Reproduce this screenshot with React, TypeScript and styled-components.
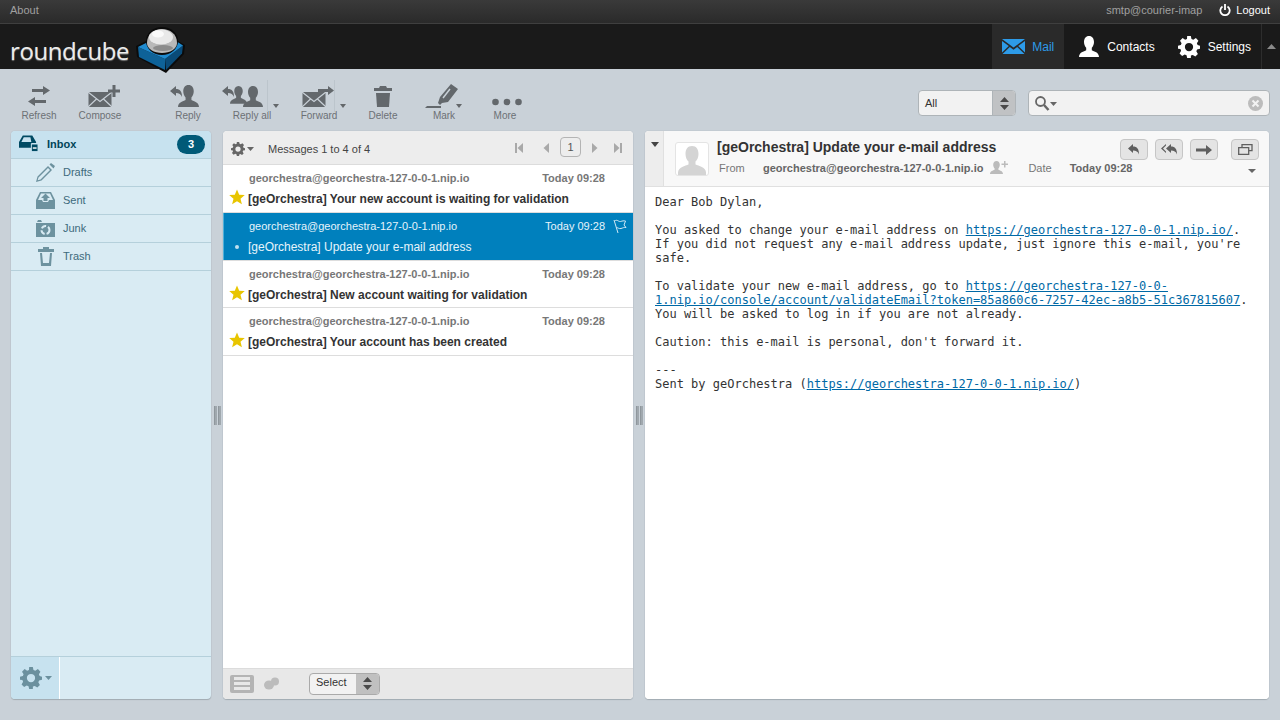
import { ReactNode } from 'react';
import styled, { createGlobalStyle } from 'styled-components';

const GlobalStyle = createGlobalStyle`
  html, body {
    margin: 0;
    padding: 0;
    height: 100%;
    overflow: hidden;
    background: #c9d1d8;
    font-family: "Liberation Sans", Arial, sans-serif;
    font-size: 12px;
  }
  #root { height: 100%; }
  * { box-sizing: border-box; }
`;

const Page = styled.div`
  width: 1280px;
  height: 720px;
  display: flex;
  flex-direction: column;
`;

const TopLine = styled.div`
  height: 24px;
  flex: none;
  display: flex;
  align-items: center;
  justify-content: space-between;
  padding: 0 10px 3px;
  background: linear-gradient(#3a3a3a, #2a2a2a);
  border-bottom: 1px solid #3f3f3f;
  font-size: 11px;
  color: #a0a0a0;
`;

const TopRight = styled.div`
  display: flex;
  align-items: center;
  gap: 17px;
`;

const Logout = styled.span`
  display: flex;
  align-items: center;
  gap: 5px;
  color: #fff;
`;

const Header = styled.div`
  height: 45px;
  flex: none;
  display: flex;
  justify-content: space-between;
  background: #1a1a1a;
  position: relative;
  z-index: 2;
`;

const Logo = styled.div`
  display: flex;
  align-items: flex-start;
  padding: 10px 0 0 10px;
`;

const LogoText = styled.span`
  width: 126px;
  font-family: "Open Sans", "Liberation Sans", sans-serif;
  font-weight: 400;
  font-size: 24px;
  line-height: 34px;
  letter-spacing: -0.4px;
  color: #ececec;
  text-shadow: 0 1px 1px #777;
`;

const LogoCube = styled.svg`
  margin-top: -7px;
  flex: none;
`;

const Nav = styled.div`
  display: flex;
  align-items: stretch;
`;

const NavTab = styled.div<{ $active?: boolean; $pl: number; $pr: number }>`
  display: flex;
  align-items: center;
  gap: ${(p) => (p.$active ? 7 : 8)}px;
  padding: 0 ${(p) => p.$pr}px 0 ${(p) => p.$pl}px;
  background: ${(p) => (p.$active ? '#2a2a2a' : 'transparent')};
  color: ${(p) => (p.$active ? '#2d9be8' : '#fff')};
`;

const NavMin = styled.div`
  width: 19px;
  display: flex;
  align-items: center;
  justify-content: center;
  border-left: 1px solid #2d2d2d;
`;

const Toolbar = styled.div`
  height: 62px;
  flex: none;
  display: flex;
  align-items: flex-start;
  padding: 10px 10px 0 11px;
`;

const ToolButton = styled.div<{ $w: number; $gap?: number }>`
  width: ${(p) => p.$w}px;
  margin-right: ${(p) => p.$gap ?? 0}px;
  display: flex;
  flex-direction: column;
  align-items: center;
  font-size: 10px;
  line-height: 12px;
  color: #6c7075;
  position: relative;
`;

// $ml / $mr push the drawing off the label's centre, the way the real toolbar sprites sit
const ToolIcon = styled.div<{ $ml?: number; $mr?: number }>`
  height: 34px;
  margin: 0 ${(p) => p.$mr ?? 0}px -3px ${(p) => p.$ml ?? 0}px;
  display: flex;
  align-items: center;
  justify-content: center;
`;

const ToolCaret = styled.span<{ $r: number }>`
  position: absolute;
  right: ${(p) => p.$r}px;
  top: 25px;
  border: 3.5px solid transparent;
  border-top: 4px solid #63676a;
  border-bottom: 0;
`;

const ToolDivider = styled.span<{ $r: number }>`
  position: absolute;
  right: ${(p) => p.$r}px;
  top: 1px;
  width: 1px;
  height: 32px;
  background: #bcc5cc;
`;

const Spring = styled.div`
  flex: 1;
`;

const FilterSelect = styled.div`
  width: 98px;
  height: 26px;
  margin: 11px 12px 0 0;
  display: flex;
  border: 1px solid #aeb4b8;
  border-radius: 4px;
  background: #f2f2f2;
  overflow: hidden;
  font-size: 11px;
  color: #333;
`;

const SelectValue = styled.div`
  flex: 1;
  padding-left: 6px;
  line-height: 24px;
`;

const SelectArrow = styled.div`
  width: 23px;
  background: #c0c2c4;
  border-left: 1px solid #aeb4b8;
  display: flex;
  align-items: center;
  justify-content: center;
`;

const SearchBox = styled.div`
  width: 242px;
  height: 26px;
  margin-top: 11px;
  display: flex;
  align-items: center;
  justify-content: space-between;
  padding: 0 6px;
  border: 1px solid #aeb4b8;
  border-radius: 4px;
  background: #f2f2f2;
`;

const Main = styled.div`
  flex: 1;
  min-height: 0;
  display: flex;
  padding: 0 11px 21px 11px;
`;

const Panel = styled.div<{ $w: number }>`
  width: ${(p) => p.$w}px;
  flex: none;
  display: flex;
  flex-direction: column;
  border-radius: 4px;
  overflow: hidden;
  background: #fff;
  box-shadow: 0 0 1px 0 #8f9aa3, 0 1px 1px 0 #a4adb4;
`;

const Splitter = styled.div`
  width: 12px;
  flex: none;
  display: flex;
  align-items: center;
  justify-content: center;
  gap: 1px;
`;

const Grip = styled.span`
  width: 3px;
  height: 19px;
  background: #a0a8ae;
  border-left: 1px solid #8f979d;
`;

const FolderPanel = styled(Panel)`
  background: #d9ebf3;
`;

const FolderList = styled.div`
  flex: 1;
`;

const FolderRow = styled.div<{ $active?: boolean }>`
  height: 28px;
  display: flex;
  align-items: center;
  padding: 0 0 1px ${(p) => (p.$active ? 8 : 25)}px;
  gap: ${(p) => (p.$active ? 9 : 8)}px;
  border-bottom: 1px solid #b5d0db;
  background: ${(p) => (p.$active ? '#c7e2ef' : 'transparent')};
  font-size: 11px;
  font-weight: ${(p) => (p.$active ? 700 : 400)};
  color: ${(p) => (p.$active ? '#004458' : '#3d6a7c')};
`;

const FolderIconBox = styled.span`
  width: 19px;
  height: 20px;
  display: flex;
  align-items: center;
  justify-content: center;
  flex: none;
`;

const Badge = styled.span`
  margin-left: auto;
  margin-right: 6px;
  width: 28px;
  height: 19px;
  border-radius: 10px;
  background: #005a78;
  color: #fff;
  font-size: 11px;
  font-weight: 700;
  text-align: center;
  line-height: 18px;
`;

const FolderFooter = styled.div`
  height: 43px;
  flex: none;
  display: flex;
  border-top: 1px solid #b5d0db;
`;

const FolderGear = styled.div`
  width: 49px;
  display: flex;
  align-items: center;
  padding-left: 9px;
  gap: 3px;
  background: #c7e2ef;
  border-right: 1px solid #fff;
`;

const ListHeader = styled.div`
  height: 34px;
  flex: none;
  display: flex;
  align-items: center;
  padding: 2px 11px 0 8px;
  background: #ededed;
  border-bottom: 1px solid #dcdcdc;
  font-size: 11px;
  color: #444;
`;

const Count = styled.span`
  margin-left: 13px;
  flex: 1;
`;

const Pager = styled.div`
  display: flex;
  align-items: center;
`;

const PagerStep = styled.span<{ $mr: number }>`
  display: flex;
  margin: -2px ${(p) => p.$mr}px 0 0;
`;

const PageBox = styled.span`
  width: 21px;
  height: 20px;
  margin-right: 10px;
  margin-top: -3px;
  border: 1px solid #b4b4b4;
  border-radius: 4px;
  text-align: center;
  line-height: 18px;
  color: #555;
`;

const Messages = styled.div`
  flex: 1;
  background: #fff;
`;

const MessageRow = styled.div<{ $selected?: boolean; $h: number }>`
  height: ${(p) => p.$h}px;
  display: grid;
  grid-template-columns: 25px 1fr 70px 28px;
  grid-template-rows: 23px 1fr;
  border-bottom: 1px solid #ddd;
  background: ${(p) => (p.$selected ? '#0080bd' : '#fff')};
  box-shadow: ${(p) => (p.$selected ? 'inset 1px 0 0 #4eb0d8' : 'none')};
  color: ${(p) => (p.$selected ? '#fff' : '#333')};
`;

const Sender = styled.span<{ $selected?: boolean }>`
  grid-column: 2;
  padding: 7px 0 0 1px;
  font-size: 11px;
  line-height: 13px;
  font-weight: ${(p) => (p.$selected ? 400 : 700)};
  color: ${(p) => (p.$selected ? '#e6f4fb' : '#777')};
`;

const DateCell = styled(Sender)`
  grid-column: 3;
  text-align: right;
  white-space: nowrap;
  padding-left: 0;
`;

const FlagCell = styled.span`
  grid-column: 4;
  padding: 6px 0 0 8px;
`;

const StarCell = styled.span`
  grid-column: 1;
  grid-row: 2;
  padding: 1px 0 0 6px;
`;

const Dot = styled.span`
  display: block;
  width: 4px;
  height: 4px;
  margin: 8px 0 0 6px;
  border-radius: 50%;
  background: #bfe0f0;
`;

const Subject = styled.span<{ $selected?: boolean }>`
  grid-column: 2 / 5;
  grid-row: 2;
  font-size: 12px;
  line-height: 20px;
  padding-top: 1px;
  font-weight: ${(p) => (p.$selected ? 400 : 700)};
  color: ${(p) => (p.$selected ? '#e6f4fb' : '#333')};
`;

const ListFooter = styled.div`
  height: 31px;
  flex: none;
  display: flex;
  align-items: center;
  padding: 0 0 1px 7px;
  background: #e8e8e8;
  border-top: 1px solid #dcdcdc;
`;

const ThreadIcons = styled.div`
  display: flex;
  align-items: center;
  gap: 10px;
  width: 79px;
`;

const ListIcon = styled.span`
  width: 24px;
  height: 18px;
  border-radius: 2px;
  background: #b4b4b4;
  display: flex;
  flex-direction: column;
  justify-content: center;
  gap: 2px;
  padding: 0 4px;

  i {
    display: block;
    height: 3px;
    background: #e8e8e8;
  }
`;

const SmallSelect = styled.div`
  width: 71px;
  height: 22px;
  display: flex;
  border: 1px solid #aaa;
  border-radius: 4px;
  background: #f2f2f2;
  overflow: hidden;
  font-size: 11px;
  color: #333;
`;

const SmallValue = styled.div`
  flex: 1;
  padding-left: 6px;
  line-height: 17px;
`;

const SmallArrow = styled.div`
  width: 23px;
  background: #c0c0c0;
  display: flex;
  align-items: center;
  justify-content: center;
`;

const MailHeader = styled.div`
  height: 56px;
  flex: none;
  display: flex;
  background: #f8f8f8;
  border-bottom: 1px solid #e0e0e0;
  position: relative;
`;

const Collapse = styled.div`
  width: 19px;
  flex: none;
  background: #ededed;
  border-right: 1px solid #e0e0e0;
  padding: 11px 0 0 6px;
`;

const CollapseArrow = styled.span`
  display: block;
  width: 0;
  border: 4px solid transparent;
  border-top: 5px solid #444;
  border-bottom: 0;
`;

const Avatar = styled.div`
  width: 34px;
  height: 34px;
  margin: 11px 8px 0 11px;
  flex: none;
  background: #fff;
  border: 1px solid #e4e4e4;
  border-radius: 3px;
  overflow: hidden;
`;

const MailSummary = styled.div`
  flex: 1;
  padding-top: 7px;
`;

const MailTitle = styled.h2`
  margin: 0;
  font-size: 14px;
  line-height: 18px;
  font-weight: 700;
  color: #333;
`;

const MailMeta = styled.div`
  display: flex;
  align-items: center;
  height: 20px;
  margin-top: 2px;
  padding-left: 2px;
  font-size: 11px;
  color: #777;
`;

const MetaFrom = styled.span`
  width: 44px;
`;

const MetaValue = styled.strong`
  color: #666;
`;

const MetaIcon = styled.svg`
  margin-left: 7px;
`;

const MetaDate = styled.span`
  margin-left: 20px;
  margin-right: 18px;
`;

const MailActions = styled.div`
  position: absolute;
  right: 10px;
  top: 8px;
  display: flex;
  gap: 7px;
`;

const ActionButton = styled.span<{ $gap?: number }>`
  width: 28px;
  height: 21px;
  margin-left: ${(p) => p.$gap ?? 0}px;
  display: flex;
  align-items: center;
  justify-content: center;
  background: #e4e4e4;
  border: 1px solid #c6c6c6;
  border-radius: 4px;
`;

const MoreHeaders = styled.span`
  position: absolute;
  right: 13px;
  top: 38px;
  border: 4px solid transparent;
  border-top: 4px solid #666;
  border-bottom: 0;
`;

const MailBody = styled.div`
  flex: 1;
  padding: 8px 10px;
  background: #fff;
  font-family: "DejaVu Sans Mono", monospace;
  font-size: 12px;
  line-height: 14px;
  color: #333;

  a {
    color: #0069a6;
    text-decoration: underline;
  }
`;

const BodyLine = styled.div`
  min-height: 14px;
  white-space: pre;
`;

const Icon = ({ w, h, children, fill = '#63686c' }: { w: number; h: number; children: ReactNode; fill?: string }) => (
  <svg width={w} height={h} viewBox={`0 0 ${w} ${h}`} fill={fill}>
    {children}
  </svg>
);

const Person = ({ x = 0, y = 0, s = 1 }: { x?: number; y?: number; s?: number }) => (
  <path
    transform={`translate(${x} ${y}) scale(${s})`}
    d="M10 0c3.200 0 5 2.600 5 6 0 2.400-1 4.600-2.200 5.800v2.400c2.200 1.200 7.200 2 7.200 6.800H0c0-4.800 5-5.600 7.200-6.800v-2.400C6 10.600 5 8.400 5 6c0-3.400 1.800-6 5-6z"
  />
);

const ReplyArrow = ({ x = 0, y = 0 }: { x?: number; y?: number }) => (
  <path transform={`translate(${x} ${y})`} d="M0 5 6 0v3c4 0 6 2.500 6 8-1-2.600-3-4-6-4v3z" />
);

const Envelope = ({ y }: { y: number }) => (
  <g transform={`translate(0 ${y})`}>
    <rect x="0.500" y="0" width="23" height="15" />
    <path d="M0 0 12 9.500 24 0M0 15l8.500-8M24 15l-8.500-8" fill="none" stroke="#c9d1d8" strokeWidth="1.200" />
  </g>
);

const Gear = ({ size, fill }: { size: number; fill: string }) => (
  <svg width={size} height={size} viewBox="0 0 24 24" fill={fill}>
    <path
      fillRule="evenodd"
      d="M10 0h4l.7 3.200 2 .8L19.500 2.300l2.800 2.800-1.700 2.800.8 2L24 10.500v3.500l-3.200.7-.8 2 1.700 2.800-2.800 2.800-2.800-1.700-2 .8L14 24h-4l-.7-3.100-2-.8-2.800 1.700-2.800-2.800 1.700-2.800-.8-2L0 14v-3.500l3.100-.6.800-2-1.700-2.800L5 2.300l2.800 1.700 2-.8zM12 7.500a4.500 4.500 0 1 0 0 9 4.500 4.500 0 0 0 0-9z"
    />
  </svg>
);

const Updown = ({ fill = '#4a4a4a' }: { fill?: string }) => (
  <svg width="9" height="13" viewBox="0 0 9 13" fill={fill}>
    <path d="M4.500 0 9 5H0zM0 8h9l-4.500 5z" />
  </svg>
);

const PagerArrow = ({ dir, bar }: { dir: 'l' | 'r'; bar?: boolean }) => (
  <svg width="9" height="10" viewBox="0 0 9 10" fill="#a9a9a9">
    {dir === 'l' ? (
      <>
        <path d="M8 0v10L2.500 5z" />
        {bar && <rect x="0" y="0" width="2" height="10" />}
      </>
    ) : (
      <>
        <path d="M1 0v10l5.500-5z" />
        {bar && <rect x="7" y="0" width="2" height="10" />}
      </>
    )}
  </svg>
);

const Star = () => (
  <svg width="16" height="16" viewBox="0 0 16 16" fill="#e8c500">
    <path d="M8 .5l2.200 5.200 5.600.4-4.300 3.600 1.400 5.500L8 12.200l-4.900 3 1.400-5.500L.2 6.100l5.600-.4z" />
  </svg>
);

const messages = [
  { subject: '[geOrchestra] Your new account is waiting for validation', h: 48 },
  { subject: '[geOrchestra] Update your e-mail address', selected: true, h: 48 },
  { subject: '[geOrchestra] New account waiting for validation', h: 47 },
  { subject: '[geOrchestra] Your account has been created', h: 48 },
];

const folders: { name: string; icon: ReactNode }[] = [
  {
    name: 'Drafts',
    icon: (
      <Icon w={19} h={19} fill="#6d929f">
        <path
          fillRule="evenodd"
          d="M0 19l1.500-5.500L12 3l4 4L5.500 17.500zM2.500 14.500l-.8 2.800 2.800-.8 9.500-9.500-2-2zM13.500 1.500 15 0l4 3-1.500 2.500z"
        />
      </Icon>
    ),
  },
  {
    name: 'Sent',
    icon: (
      <Icon w={19} h={17} fill="#6d929f">
        <path d="M4 0h11l4 8v9H0V8z" />
        <path d="M5 1.500h9L17 8h-4l-1 2H7L6 8H2z" fill="#d9ebf3" />
        <path d="M9.500 1.500 14 6h-2.500v3h-4V6H5z" />
      </Icon>
    ),
  },
  {
    name: 'Junk',
    icon: (
      <Icon w={19} h={17} fill="#6d929f">
        <path d="M1 2h5l-1-2H2zM0 3h19v14H0z" />
        <circle cx="9.500" cy="10" r="4" fill="none" stroke="#d9ebf3" strokeWidth="2" strokeDasharray="5 2" />
      </Icon>
    ),
  },
  {
    name: 'Trash',
    icon: (
      <Icon w={16} h={20} fill="#6d929f">
        <path d="M0 3h16v3H0zM5 1h6v2H5z" />
        <path d="M2 7h2l1 10h6l1-10h2l-1 13H3z" />
      </Icon>
    ),
  },
];

export default function App() {
  return (
    <Page>
      <GlobalStyle />
      <TopLine>
        <span>About</span>
        <TopRight>
          <span>smtp@courier-imap</span>
          <Logout>
            <svg width="12" height="12" viewBox="0 0 12 12" fill="none" stroke="#fff" strokeWidth="1.800">
              <path d="M3.500 2.500a4.700 4.700 0 1 0 5 0M6 0v6" />
            </svg>
            Logout
          </Logout>
        </TopRight>
      </TopLine>
      <Header>
        <Logo>
          <LogoText>roundcube</LogoText>
          <LogoCube width="50" height="46" viewBox="0 0 50 46">
            <path d="M0 19 12 13h28l9 5-1 9-18 19L1 30z" fill="#0b0b0b" />
            <path d="M2 20 29 32v11L3 30z" fill="#0e6298" />
            <path d="M29 32 47 18.500l-1 8L30 43z" fill="#0a4b78" />
            <path d="M2 20 14 14h26l7 4.500L29 32z" fill="#1f8bd0" />
            <ellipse cx="26" cy="14" rx="16" ry="14" fill="#0b0b0b" />
            <path d="M11 16C11 7 18 2 26 2s15 5 15 14c0 6-7 10-15 10S11 22 11 16z" fill="#b9b9b9" />
            <ellipse cx="25" cy="10" rx="12" ry="7.500" fill="#e9e9e9" />
            <ellipse cx="22" cy="7" rx="6" ry="3.500" fill="#fafafa" />
            <ellipse cx="27" cy="21" rx="10" ry="3" fill="#8c8c8c" />
          </LogoCube>
        </Logo>
        <Nav>
          <NavTab $active $pl={10} $pr={10}>
            <svg width="23" height="15" viewBox="0 0 23 15" fill="#2d9be8">
              <path d="M0 0h23L11.500 8.500zM0 2l6.800 5L0 13.500zM23 2v11.500L16.200 7zM7.800 8l3.700 2.700L15.200 8 22.500 15H.5z" />
            </svg>
            Mail
          </NavTab>
          <NavTab $pl={15} $pr={11}>
            <svg width="20" height="21" viewBox="0 0 20 21" fill="#fff">
              <Person />
            </svg>
            Contacts
          </NavTab>
          <NavTab $pl={12} $pr={10}>
            <Gear size={22} fill="#fff" />
            Settings
          </NavTab>
          <NavMin>
            <svg width="9" height="5" viewBox="0 0 9 5" fill="#8a8a8a">
              <path d="M4.500 0 9 5H0z" />
            </svg>
          </NavMin>
        </Nav>
      </Header>
      <Toolbar>
        <ToolButton $w={56} $gap={5}>
          <ToolIcon>
            <Icon w={22} h={20}>
              <path d="M4 3h11V0l7 4.500L15 9V6H4zM18 14H7v-3l-7 4.500L7 20v-3h11z" />
            </Icon>
          </ToolIcon>
          Refresh
        </ToolButton>
        <ToolButton $w={56} $gap={40}>
          <ToolIcon $ml={8}>
            <Icon w={32} h={22}>
              <Envelope y={7} />
              <path d="M24.500 0h3v4.500H32v3h-4.500V12h-3V7.500H20v-3h4.500z" />
            </Icon>
          </ToolIcon>
          Compose
        </ToolButton>
        <ToolButton $w={40} $gap={13}>
          <ToolIcon $mr={6}>
            <Icon w={30} h={22}>
              <ReplyArrow y={1} />
              <Person x={8} y={0} s={1.050} />
            </Icon>
          </ToolIcon>
          Reply
        </ToolButton>
        <ToolButton $w={62} $gap={12}>
          <ToolIcon $mr={19}>
            <Icon w={42} h={22}>
              <ReplyArrow y={1} />
              <Person x={8} y={1} s={0.850} />
              <Person x={21} y={1} s={1} />
            </Icon>
          </ToolIcon>
          Reply all
          <ToolDivider $r={15} />
          <ToolCaret $r={4} />
        </ToolButton>
        <ToolButton $w={48} $gap={21}>
          <ToolIcon>
            <Icon w={34} h={22}>
              <Envelope y={7} />
              <path d="M16 4h10V1l6 4.500L26 10V7H16z" />
            </Icon>
          </ToolIcon>
          Forward
          <ToolDivider $r={8} />
          <ToolCaret $r={-3} />
        </ToolButton>
        <ToolButton $w={38} $gap={20}>
          <ToolIcon>
            <Icon w={18} h={21}>
              <path d="M6 0h6l1 2h5v3H0V2h5z" />
              <path d="M2 7h14l-1 14H3z" />
            </Icon>
          </ToolIcon>
          Delete
        </ToolButton>
        <ToolButton $w={44} $gap={20}>
          <ToolIcon $mr={5}>
            <Icon w={34} h={24}>
              <path d="M0 24l2-2h14v2z" />
              <path d="M13 19l2-6L26 0l7 5-10 13-6 1-2 2z" />
              <path d="M18 14l7-9" stroke="#c9d1d8" strokeWidth="1.500" fill="none" />
            </Icon>
          </ToolIcon>
          Mark
          <ToolCaret $r={4} />
        </ToolButton>
        <ToolButton $w={38}>
          <ToolIcon $ml={3}>
            <Icon w={30} h={20}>
              <circle cx="3.500" cy="16" r="3.300" />
              <circle cx="15" cy="16" r="3.300" />
              <circle cx="26.500" cy="16" r="3.300" />
            </Icon>
          </ToolIcon>
          More
        </ToolButton>
        <Spring />
        <FilterSelect>
          <SelectValue>All</SelectValue>
          <SelectArrow>
            <Updown />
          </SelectArrow>
        </FilterSelect>
        <SearchBox>
          <svg width="22" height="15" viewBox="0 0 22 15" fill="none" stroke="#666">
            <circle cx="5.500" cy="5.500" r="4.500" strokeWidth="1.800" />
            <path d="M9 9l4.500 5" strokeWidth="2.500" />
            <path d="M15 6h7l-3.500 4z" fill="#666" stroke="none" />
          </svg>
          <svg width="15" height="15" viewBox="0 0 15 15">
            <circle cx="7.500" cy="7.500" r="7.500" fill="#bcbcbc" />
            <path d="M4.500 4.500l6 6M10.500 4.500l-6 6" stroke="#f2f2f2" strokeWidth="2" />
          </svg>
        </SearchBox>
      </Toolbar>
      <Main>
        <FolderPanel $w={200}>
          <FolderList>
            <FolderRow $active>
              <FolderIconBox>
                <svg width="20" height="18" viewBox="0 0 20 18" fill="#004a63">
                  <path d="M4 0h10l4 7v1h-5v5H0V7zM5 2 2.500 7H13l-1-5z" fillRule="evenodd" />
                  <rect x="13" y="9" width="7" height="8" fill="#004a63" stroke="#c7e2ef" />
                  <rect x="14.500" y="12.500" width="4" height="1.500" fill="#fff" />
                </svg>
              </FolderIconBox>
              Inbox
              <Badge>3</Badge>
            </FolderRow>
            {folders.map((f) => (
              <FolderRow key={f.name}>
                <FolderIconBox>{f.icon}</FolderIconBox>
                {f.name}
              </FolderRow>
            ))}
          </FolderList>
          <FolderFooter>
            <FolderGear>
              <Gear size={22} fill="#6b909e" />
              <svg width="7" height="4" viewBox="0 0 7 4" fill="#6b909e">
                <path d="M0 0h7L3.500 4z" />
              </svg>
            </FolderGear>
          </FolderFooter>
        </FolderPanel>
        <Splitter>
          <Grip />
          <Grip />
        </Splitter>
        <Panel $w={410}>
          <ListHeader>
            <Gear size={14} fill="#666" />
            <svg width="10" height="4" viewBox="0 0 10 4" fill="#666">
              <path d="M2 0h7L5.500 4z" />
            </svg>
            <Count>Messages 1 to 4 of 4</Count>
            <Pager>
              <PagerStep $mr={17}>
                <PagerArrow dir="l" bar />
              </PagerStep>
              <PagerStep $mr={10}>
                <PagerArrow dir="l" />
              </PagerStep>
              <PageBox>1</PageBox>
              <PagerStep $mr={13}>
                <PagerArrow dir="r" />
              </PagerStep>
              <PagerStep $mr={0}>
                <PagerArrow dir="r" bar />
              </PagerStep>
            </Pager>
          </ListHeader>
          <Messages>
            {messages.map((m) => (
              <MessageRow key={m.subject} $selected={m.selected} $h={m.h}>
                <Sender $selected={m.selected}>georchestra@georchestra-127-0-0-1.nip.io</Sender>
                <DateCell $selected={m.selected}>Today 09:28</DateCell>
                {m.selected && (
                  <FlagCell>
                    <svg width="14" height="15" viewBox="0 0 14 15" fill="none" stroke="#cfe8f5">
                      <path d="M1 1l4 13M1.500 2c3-2 4 1 6 .5s3-1 5-.5L11 6l2 2.500c-2-.5-3 .5-5 1s-3.500-1-4.500-1" />
                    </svg>
                  </FlagCell>
                )}
                <StarCell>{m.selected ? <Dot /> : <Star />}</StarCell>
                <Subject $selected={m.selected}>{m.subject}</Subject>
              </MessageRow>
            ))}
          </Messages>
          <ListFooter>
            <ThreadIcons>
              <ListIcon>
                <i />
                <i />
                <i />
              </ListIcon>
              <svg width="15" height="13" viewBox="0 0 15 13" fill="#bcbcbc">
                <ellipse cx="5" cy="8" rx="5" ry="4.500" />
                <ellipse cx="11" cy="4.500" rx="4" ry="4" />
              </svg>
            </ThreadIcons>
            <SmallSelect>
              <SmallValue>Select</SmallValue>
              <SmallArrow>
                <Updown />
              </SmallArrow>
            </SmallSelect>
          </ListFooter>
        </Panel>
        <Splitter>
          <Grip />
          <Grip />
        </Splitter>
        <Panel $w={624}>
          <MailHeader>
            <Collapse>
              <CollapseArrow />
            </Collapse>
            <Avatar>
              <svg width="32" height="32" viewBox="0 0 32 32" fill="#d4d4d4">
                <path d="M16 3c4.500 0 6.500 3.500 6.500 8 0 3.200-1.300 6-3 7.500v3c3 1.500 10.500 2.500 10.500 8V32H2v-2.500c0-5.500 7.500-6.500 10.500-8v-3c-1.700-1.500-3-4.300-3-7.500 0-4.500 2-8 6.500-8z" />
              </svg>
            </Avatar>
            <MailSummary>
              <MailTitle>[geOrchestra] Update your e-mail address</MailTitle>
              <MailMeta>
                <MetaFrom>From</MetaFrom>
                <MetaValue>georchestra@georchestra-127-0-0-1.nip.io</MetaValue>
                <MetaIcon width="18" height="14" viewBox="0 0 18 14" fill="#bbb">
                  <path d="M6.500 0c2 0 3.300 1.600 3.300 3.800 0 1.500-.6 2.900-1.400 3.700v1.200c1.400.7 4.600 1.300 4.600 4.300H0c0-3 3.200-3.600 4.600-4.300V7.500C3.800 6.700 3.200 5.300 3.200 3.800 3.200 1.600 4.500 0 6.500 0z" />
                  <path d="M14 0h1.500v2.500H18V4h-2.500v2.500H14V4h-2.500V2.500H14z" />
                </MetaIcon>
                <MetaDate>Date</MetaDate>
                <MetaValue>Today 09:28</MetaValue>
              </MailMeta>
            </MailSummary>
            <MailActions>
              <ActionButton>
                <svg width="12" height="11" viewBox="0 0 12 11" fill="#5f5f5f">
                  <path d="M0 4.500 5 0v2.500c4 0 6 2.500 6 8-1-3-3-4-6-4V9z" />
                </svg>
              </ActionButton>
              <ActionButton>
                <svg width="17" height="11" viewBox="0 0 17 11" fill="#5f5f5f">
                  <path d="M5 4.500 10 0v2.500c4 0 6 2.500 6 8-1-3-3-4-6-4V9zM5 0v1.500L2 4.500l3 3V9L0 4.500z" />
                </svg>
              </ActionButton>
              <ActionButton>
                <svg width="16" height="10" viewBox="0 0 16 10" fill="#5f5f5f">
                  <path d="M0 3.500h10V0l6 5-6 5V6.500H0z" />
                </svg>
              </ActionButton>
              <ActionButton $gap={6}>
                <svg width="15" height="11" viewBox="0 0 15 11" fill="none" stroke="#5f5f5f" strokeWidth="1.300">
                  <path d="M4 3V.7h10v6h-3M.7 3.700h10v6.600H.7z" />
                </svg>
              </ActionButton>
            </MailActions>
            <MoreHeaders />
          </MailHeader>
          <MailBody>
            <BodyLine>Dear Bob Dylan,</BodyLine>
            <BodyLine />
            <BodyLine>
              {'You asked to change your e-mail address on '}
              <a>https://georchestra-127-0-0-1.nip.io/</a>.
            </BodyLine>
            <BodyLine>If you did not request any e-mail address update, just ignore this e-mail, you're</BodyLine>
            <BodyLine>safe.</BodyLine>
            <BodyLine />
            <BodyLine>
              {'To validate your new e-mail address, go to '}
              <a>https://georchestra-127-0-0-</a>
            </BodyLine>
            <BodyLine>
              <a>1.nip.io/console/account/validateEmail?token=85a860c6-7257-42ec-a8b5-51c367815607</a>.
            </BodyLine>
            <BodyLine>You will be asked to log in if you are not already.</BodyLine>
            <BodyLine />
            <BodyLine>Caution: this e-mail is personal, don't forward it.</BodyLine>
            <BodyLine />
            <BodyLine>---</BodyLine>
            <BodyLine>
              {'Sent by geOrchestra ('}
              <a>https://georchestra-127-0-0-1.nip.io/</a>)
            </BodyLine>
          </MailBody>
        </Panel>
      </Main>
    </Page>
  );
}
